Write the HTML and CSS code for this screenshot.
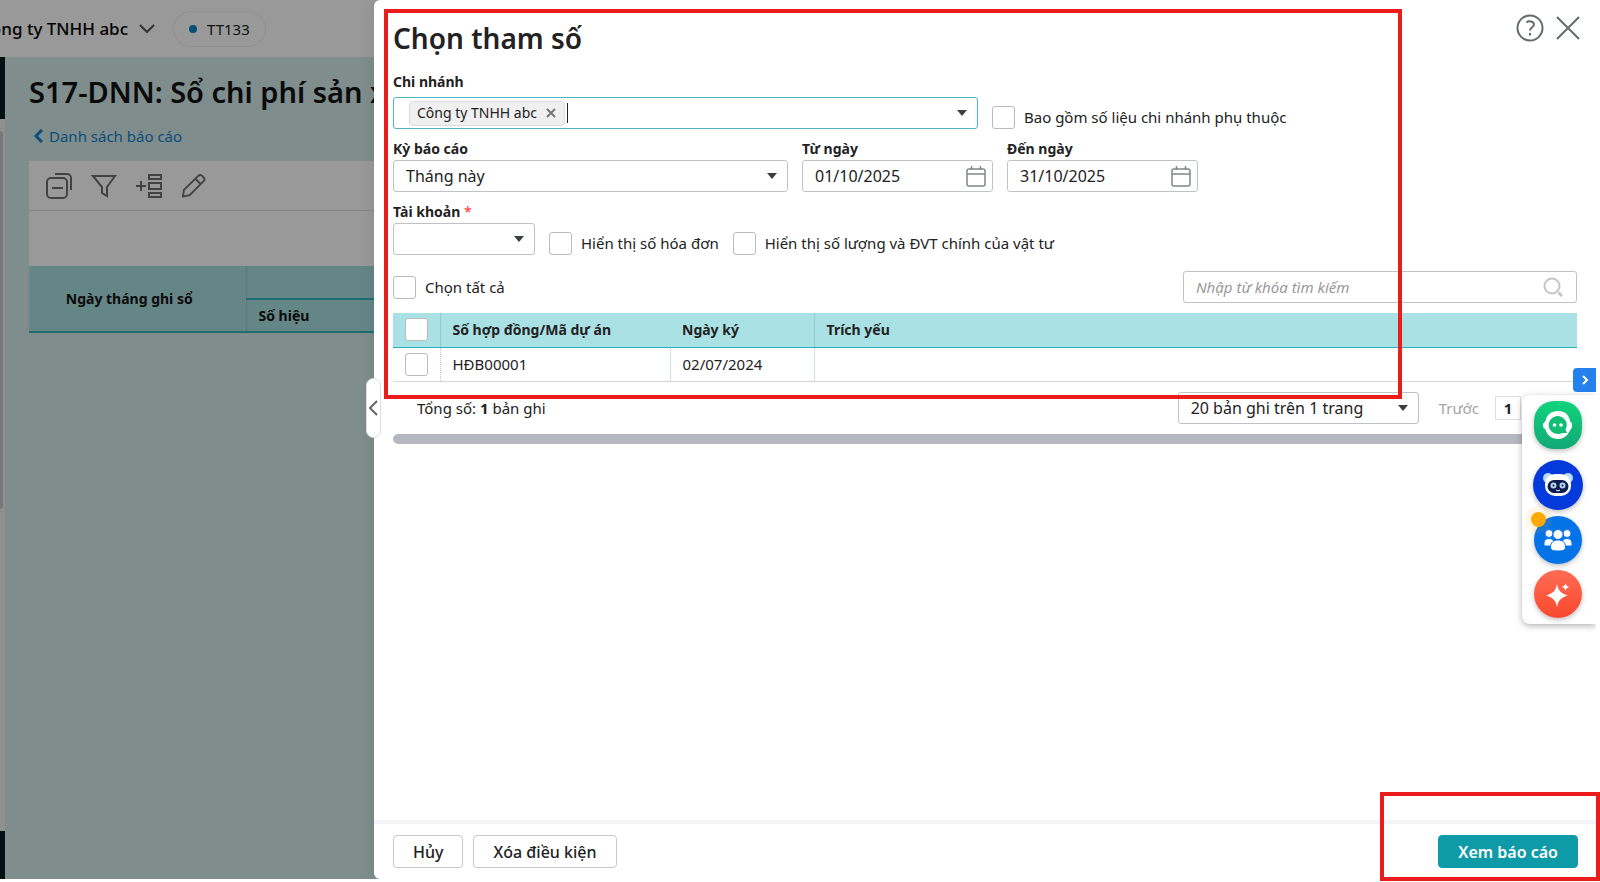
FILE: index.html
```html
<!DOCTYPE html>
<html lang="vi">
<head>
    <meta charset="UTF-8">
    <meta name="viewport" content="width=device-width, initial-scale=1.0">
    <title>S17-DNN: Sổ chi phí sản xuất</title>
    <link rel="stylesheet" href="styles.css">
</head>
<body>

<div class="app">

    <header class="topbar">
        <div class="company"><span>Công ty TNHH abc</span></div>
        <svg class="chevron" width="16" height="10" viewBox="0 0 16 10" fill="none" stroke="#555" stroke-width="2"><path d="M1 1l7 7 7-7"/></svg>
        <span class="badge">TT133</span>
    </header>

    <div class="workspace">
        <div class="sidebar"><div class="sidebar-scroll"><div class="sidebar-thumb"></div></div></div>
        <main class="report">
            <h1>S17-DNN: Sổ chi phí sản xuất</h1>
            <a class="back" href="#">
                <svg width="9" height="14" viewBox="0 0 9 14" fill="none" stroke="currentColor" stroke-width="3"><path d="M8 1L2 7l6 6"/></svg>
                Danh sách báo cáo
            </a>
            <div class="toolbar">
                <button aria-label="Thu gọn">
                    <svg width="26" height="26" viewBox="0 0 26 26" fill="none" stroke="#6f6f6f" stroke-width="2"><rect x="1" y="5" width="20" height="20" rx="4"/><path d="M6 15h11M9 1h12a4 4 0 0 1 4 4v12"/></svg>
                </button>
                <button aria-label="Lọc">
                    <svg width="26" height="24" viewBox="0 0 26 24" fill="none" stroke="#6f6f6f" stroke-width="2"><path d="M2 2h22l-8 11v9l-5-3v-6z"/></svg>
                </button>
                <button aria-label="Thêm cột">
                    <svg width="26" height="24" viewBox="0 0 26 24" fill="none" stroke="#6f6f6f" stroke-width="2"><path d="M0 12h10M5 7v10"/><path d="M13 1h12v4H13zM13 9h12v6H13zM13 19h12v4H13z"/></svg>
                </button>
                <button aria-label="Sửa">
                    <svg width="25" height="26" viewBox="0 0 26 26" fill="none" stroke="#6f6f6f" stroke-width="2"><path d="M2 24l1-7L18 2.500a3 3 0 0 1 4 0l1.500 1.500a3 3 0 0 1 0 4L9 22.500zM15 5.500l5.500 5.500"/></svg>
                </button>
            </div>
            <div class="report-blank"></div>
            <table class="report-table">
                <thead>
                    <tr><th class="day" rowspan="2">Ngày tháng ghi sổ</th><th class="group"></th></tr>
                    <tr><th class="number">Số hiệu</th></tr>
                </thead>
            </table>
        </main>
    </div>

    <div class="overlay"></div>

    <form class="drawer">
        <button type="button" class="handle" aria-label="Thu gọn bảng">
            <svg width="9" height="16" viewBox="0 0 9 16" fill="none" stroke="#666" stroke-width="2"><path d="M8 1L1 8l7 7"/></svg>
        </button>

        <div class="drawer-head">
            <h2>Chọn tham số</h2>
            <div class="head-actions">
                <button type="button" aria-label="Trợ giúp">
                    <svg width="28" height="28" viewBox="0 0 28 28" fill="none" stroke="#666b6f" stroke-width="2"><circle cx="14" cy="14" r="12.500"/><path d="M10.500 8.500c2-2 7.500-1.500 7.500 2 0 3-4 2.500-4 6"/><path d="M14 19v2.500"/></svg>
                </button>
                <button type="button" aria-label="Đóng">
                    <svg width="24" height="24" viewBox="0 0 24 24" fill="none" stroke="#666b6f" stroke-width="2"><path d="M1 1l22 22M23 1L1 23"/></svg>
                </button>
            </div>
        </div>

        <div class="drawer-body">
            <div class="form-row">
                <div class="field branch">
                    <label for="branch">Chi nhánh</label>
                    <div class="tagbox">
                        <span class="tag">Công ty TNHH abc
                            <button type="button" aria-label="Bỏ chọn"><svg width="10" height="10" viewBox="0 0 10 10" stroke="#777" stroke-width="2"><path d="M1 1l8 8M9 1L1 9"/></svg></button>
                        </span>
                        <span class="caret"></span>
                        <input type="text" id="branch">
                        <svg class="arrow" width="10" height="6" viewBox="0 0 10 6" fill="#3d4043"><path d="M0 0h10L5 6z"/></svg>
                    </div>
                </div>
                <label class="check"><input type="checkbox"> Bao gồm số liệu chi nhánh phụ thuộc</label>
            </div>

            <div class="form-row">
                <div class="field period">
                    <label for="period">Kỳ báo cáo</label>
                    <div class="select">
                        <select id="period"><option>Tháng này</option></select>
                        <svg class="arrow" width="10" height="6" viewBox="0 0 10 6" fill="#3d4043"><path d="M0 0h10L5 6z"/></svg>
                    </div>
                </div>
                <div class="field date">
                    <label for="from">Từ ngày</label>
                    <div class="datebox">
                        <input type="text" id="from" value="01/10/2025">
                        <button type="button" aria-label="Chọn ngày bắt đầu"><svg width="20" height="21" viewBox="0 0 20 21" fill="none" stroke="#83878b"><rect x="1" y="3" width="18" height="17" rx="2" stroke-width="1.500"/><path d="M1 8h18M5.500 0v4M14.500 0v4" stroke-width="1.500"/></svg></button>
                    </div>
                </div>
                <div class="field date">
                    <label for="to">Đến ngày</label>
                    <div class="datebox">
                        <input type="text" id="to" value="31/10/2025">
                        <button type="button" aria-label="Chọn ngày kết thúc"><svg width="20" height="21" viewBox="0 0 20 21" fill="none" stroke="#83878b"><rect x="1" y="3" width="18" height="17" rx="2" stroke-width="1.500"/><path d="M1 8h18M5.500 0v4M14.500 0v4" stroke-width="1.500"/></svg></button>
                    </div>
                </div>
            </div>

            <div class="form-row">
                <div class="field account">
                    <label for="account">Tài khoản <span class="required">*</span></label>
                    <div class="select">
                        <select id="account"><option></option></select>
                        <svg class="arrow" width="10" height="6" viewBox="0 0 10 6" fill="#3d4043"><path d="M0 0h10L5 6z"/></svg>
                    </div>
                </div>
                <label class="check"><input type="checkbox"> Hiển thị số hóa đơn</label>
                <label class="check"><input type="checkbox"> Hiển thị số lượng và ĐVT chính của vật tư</label>
            </div>

            <div class="list-tools">
                <label class="check"><input type="checkbox"> Chọn tất cả</label>
                <div class="search">
                    <input type="text" placeholder="Nhập từ khóa tìm kiếm" aria-label="Tìm kiếm">
                    <svg width="20" height="20" viewBox="0 0 20 20" fill="none" stroke="#c4c6c8" stroke-width="2"><circle cx="9" cy="9" r="7.500"/><path d="M15.500 15.500l3.500 3.500" stroke-width="3"/></svg>
                </div>
            </div>

            <table class="contracts">
                <thead>
                    <tr>
                        <th class="col-check"><input type="checkbox" aria-label="Chọn tất cả hợp đồng"></th>
                        <th class="col-code">Số hợp đồng/Mã dự án</th>
                        <th class="col-date">Ngày ký</th>
                        <th>Trích yếu</th>
                    </tr>
                </thead>
                <tbody>
                    <tr>
                        <td class="col-check"><input type="checkbox" aria-label="Chọn HĐB00001"></td>
                        <td>HĐB00001</td>
                        <td>02/07/2024</td>
                        <td></td>
                    </tr>
                </tbody>
            </table>

            <div class="pager">
                <span class="total">Tổng số: <b>1</b> bản ghi</span>
                <div class="select page-size">
                    <select aria-label="Số bản ghi trên trang"><option>20 bản ghi trên 1 trang</option></select>
                    <svg class="arrow" width="10" height="6" viewBox="0 0 10 6" fill="#3d4043"><path d="M0 0h10L5 6z"/></svg>
                </div>
                <a class="prev" href="#">Trước</a>
                <a class="page" href="#">1</a>
            </div>
            <div class="hscroll"></div>
        </div>

        <div class="drawer-foot">
            <button type="button" class="btn">Hủy</button>
            <button type="button" class="btn">Xóa điều kiện</button>
            <button type="submit" class="btn primary">Xem báo cáo</button>
        </div>
    </form>

    <button class="dock-toggle" aria-label="Ẩn tiện ích">
        <svg width="8" height="10" viewBox="0 0 8 10" fill="none" stroke="#fff" stroke-width="2"><path d="M2 1l4 4-4 4"/></svg>
    </button>
    <div class="dock">
        <button class="dock-item chat" aria-label="Trò chuyện">
            <svg width="30" height="28" viewBox="0 0 30 28"><path fill="#fff" d="M15 0C8 0 3.500 4 2.500 10L0 13v3l2.500 2.500C4 24 8.500 28 15 28c5.500 0 9-3 11-7l3-4.500v-4L27 10C26 4 22 0 15 0z"/><path fill="#12bc76" d="M15 5a9.500 9 0 1 0 4.500 17H24l-1.500-3.500A9.500 9 0 0 0 15 5z"/><circle cx="11.500" cy="14" r="1.800" fill="#fff"/><circle cx="18" cy="14" r="1.800" fill="#fff"/></svg>
        </button>
        <button class="dock-item bot" aria-label="Trợ lý">
            <svg width="30" height="26" viewBox="0 0 30 26"><circle cx="5" cy="6" r="5" fill="#b9dcff"/><circle cx="25" cy="6" r="5" fill="#b9dcff"/><rect x="2" y="2" width="26" height="22" rx="10" fill="#fff"/><rect x="4.500" y="8" width="21" height="13" rx="6.500" fill="#0c1c50"/><g fill="none" stroke="#b8d4e8" stroke-width="2"><circle cx="10.500" cy="13.500" r="2"/><circle cx="19.500" cy="13.500" r="2"/></g><path d="M13 18q2 2 4 0" fill="none" stroke="#fff"/></svg>
        </button>
        <button class="dock-item team" aria-label="Cộng đồng">
            <svg width="28" height="22" viewBox="0 0 28 22" fill="#fff" stroke="#0573e8"><circle cx="5" cy="4.500" r="4" /><circle cx="23" cy="4.500" r="4"/><path d="M0 17v-3c0-3 2-4.500 5-4.500s5 1.500 5 4.500v3zM18 17v-3c0-3 2-4.500 5-4.500s5 1.500 5 4.500v3z"/><circle cx="14" cy="5.500" r="5"/><path d="M6.500 18c0-4.500 3-7 7.500-7s7.500 2.500 7.500 7c0 3-2 4-7.500 4s-7.500-1-7.500-4z"/></svg>
            <span class="dot"></span>
        </button>
        <button class="dock-item ai" aria-label="AI">
            <svg width="26" height="26" viewBox="0 0 26 26" fill="#fff"><path d="M12 3c1.500 7 4 9.500 11 11.500-7 2-9.500 4.500-11 11.500-1.500-7-4-9.500-11-11.500C8 12.500 10.500 10 12 3zM20.500 2c.5 2.500 1.500 3.500 4 4-2.500.5-3.500 1.500-4 4-.5-2.500-1.500-3.500-4-4 2.500-.5 3.500-1.500 4-4z"/></svg>
        </button>
    </div>
</div>

<!-- highlight frames -->
<div class="frame frame-params"></div>
<div class="frame frame-submit"></div>

</body>
</html>
```
FILE: styles.css
```css
* {
    box-sizing: border-box;
}
body {
    margin: 0;
    padding: 0 4px 3px 0;
    height: 100vh;
    position: relative;
    overflow: hidden;
    background: #fff;
    color: #222;
    font-family: "Noto Sans", sans-serif;
    font-size: 15px;
    line-height: 22px;
}
button, input, select {
    font: inherit;
    font-size: 16px;
    color: inherit;
}
button {
    padding: 0;
    border: none;
    background: none;
    cursor: pointer;
}
svg {
    display: block;
    flex: none;
}
.app {
    position: relative;
    height: 100%;
    display: flex;
    flex-direction: column;
    overflow: hidden;
}

/* page behind the drawer */
.topbar {
    height: 57px;
    display: flex;
    align-items: center;
    background: #fff;
}
.company {
    width: 128px;
    display: flex;
    justify-content: flex-end;
    overflow: hidden;
    white-space: nowrap;
    font-size: 17px;
    font-weight: 500;
    color: #000;
}
.chevron {
    margin: 0 18px 0 11px;
}
.badge {
    display: flex;
    align-items: center;
    gap: 10px;
    height: 36px;
    padding: 0 15px;
    border: 1px solid #f0f0f0;
    border-radius: 18px;
}
.badge::before {
    content: "";
    width: 8px;
    height: 8px;
    border-radius: 50%;
    background: #0b84c0;
}
.workspace {
    flex: 1;
    display: flex;
    background: #d4ebeb;
}
.sidebar {
    width: 5px;
    padding: 62px 0 48px;
    background: #001a1e;
}
.sidebar-scroll {
    height: 100%;
    padding-top: 12px;
    background: #f0f0f2;
}
.sidebar-thumb {
    width: 3px;
    height: 54%;
    border-radius: 0 3px 3px 0;
    background: #c9c9cd;
}
.report {
    flex: 1;
    min-width: 0;
    padding: 15px 0 0 24px;
}
.report h1 {
    max-width: 346px;
    margin: 0;
    font-size: 29px;
    font-weight: 600;
    line-height: 40px;
    color: #111;
    white-space: nowrap;
    overflow: hidden;
}
.back {
    display: inline-flex;
    align-items: center;
    gap: 6px;
    margin: 13px 0 14px 5px;
    color: #1583c8;
    text-decoration: none;
}
.toolbar {
    height: 50px;
    padding: 0 17px;
    display: flex;
    align-items: center;
    gap: 19px;
    background: #fff;
    border-bottom: 1px solid #e0e0e0;
}
.report-blank {
    height: 55px;
    background: #fff;
}
.report-table {
    width: 100%;
    border-collapse: collapse;
    table-layout: fixed;
    background: #a9dfe2;
    border-bottom: 2px solid #35b4bf;
    font-size: 14px;
    color: #111;
}
.report-table .day {
    width: 217px;
    padding: 0 16px 0 0;
    border-right: 1px solid #8fc9cf;
}
.report-table .group {
    height: 33px;
    border-bottom: 2px solid #35b4bf;
}
.report-table .number {
    height: 33px;
    padding: 0 12px;
    text-align: left;
}
.overlay {
    position: absolute;
    inset: 0;
    background: rgba(0, 0, 0, 0.4);
}

/* drawer */
.drawer {
    position: absolute;
    top: 0;
    right: 0;
    bottom: 0;
    left: 374px;
    display: flex;
    flex-direction: column;
    background: #fff;
    border-radius: 6px 0 0 6px;
    box-shadow: 0 0 16px rgba(0, 0, 0, 0.1);
}
.handle {
    position: absolute;
    left: -8px;
    top: 43%;
    width: 15px;
    height: 60px;
    display: flex;
    align-items: center;
    justify-content: center;
    background: #fff;
    border: 1px solid #ddd;
    border-radius: 8px;
}
.drawer-head {
    display: flex;
    justify-content: space-between;
    align-items: flex-start;
    padding: 14px 16px 0 19px;
}
.drawer-head h2 {
    margin: 4px 0 0;
    font-size: 28px;
    font-weight: 600;
    line-height: 40px;
}
.head-actions {
    display: flex;
    align-items: center;
    gap: 12px;
}
.drawer-body {
    flex: 1;
    padding: 13px 19px 0;
}
.form-row {
    display: flex;
    align-items: flex-end;
    gap: 14px;
    margin-bottom: 9px;
}
.field {
    display: flex;
    flex-direction: column;
}
.field label {
    font-size: 14px;
    font-weight: 700;
}
.branch label {
    margin-bottom: 4px;
}
.branch {
    width: 585px;
}
.period {
    width: 395px;
}
.date {
    width: 191px;
}
.account {
    width: 142px;
}
.field label .required {
    color: #f33;
    font-weight: 400;
}
.tagbox, .select, .datebox, .search {
    height: 32px;
    display: flex;
    align-items: center;
    border: 1px solid #bfc3c9;
    border-radius: 3px;
    background: #fff;
}
.tagbox {
    padding: 0 10px 0 15px;
    border-color: #4fb6c2;
}
.tagbox input {
    flex: 1;
    min-width: 0;
    border: none;
    outline: none;
}
.tag {
    display: flex;
    align-items: center;
    gap: 9px;
    height: 25px;
    padding: 0 8px 0 7px;
    background: #f0f0f0;
    border: 1px solid #dcdcde;
    border-radius: 4px;
    font-size: 14px;
}
.caret {
    width: 1px;
    height: 20px;
    margin-left: 2px;
    background: #222;
}
.select {
    position: relative;
}
.select select {
    width: 100%;
    height: 100%;
    padding: 0 30px 0 12px;
    border: none;
    outline: none;
    background: none;
    appearance: none;
}
.select .arrow {
    position: absolute;
    right: 10px;
    pointer-events: none;
}
.datebox {
    padding: 0 6px 0 12px;
}
.datebox input {
    flex: 1;
    min-width: 0;
    padding: 0;
    border: none;
    outline: none;
}
.check {
    display: flex;
    align-items: center;
    gap: 9px;
    height: 24px;
}
input[type="checkbox"] {
    appearance: none;
    flex: none;
    width: 23px;
    height: 23px;
    margin: 0;
    border: 1px solid #b9bbbd;
    border-radius: 3px;
    background: #fff;
}
.list-tools {
    display: flex;
    justify-content: space-between;
    align-items: center;
    margin: 16px 0 10px;
}
.search {
    width: 394px;
    padding: 0 13px 0 12px;
}
.search input {
    flex: 1;
    padding: 0;
    border: none;
    outline: none;
}
.search input::placeholder {
    color: #999;
    font-size: 15px;
    font-style: italic;
}
.contracts {
    width: 100%;
    border-collapse: collapse;
    table-layout: fixed;
}
.contracts th, .contracts td {
    height: 34px;
    padding: 0 12px;
    text-align: left;
}
.contracts th {
    background: #a9e1e5;
    border-bottom: 1px solid #2bb0bd;
    font-size: 14px;
    font-weight: 700;
}
.contracts td {
    border-bottom: 1px solid #d8d8d8;
}
.contracts td + td {
    border-left: 1px dotted #9ad3e0;
}
.contracts th:nth-child(2), .contracts th:nth-child(4) {
    border-left: 1px solid #90c9d0;
}
.contracts .col-check {
    width: 47px;
}
.contracts .col-check input {
    display: block;
}
.contracts .col-code {
    width: 230px;
}
.contracts .col-date {
    width: 144px;
}
.pager {
    display: flex;
    align-items: center;
    padding: 10px 56px 10px 24px;
}
.page-size {
    width: 241px;
    margin-left: auto;
}
.prev {
    margin: 0 16px 0 20px;
    color: #a5a5a5;
    text-decoration: none;
}
.page {
    width: 26px;
    border: 1px solid #ddd;
    color: inherit;
    font-weight: 700;
    text-align: center;
    text-decoration: none;
}
.hscroll {
    height: 10px;
    border-radius: 5px;
    background: #b5b8c1;
}
.drawer-foot {
    display: flex;
    gap: 10px;
    padding: 11px 18px 11px 19px;
    border-top: 4px solid #f3f3f8;
}
.btn {
    height: 33px;
    padding: 0 19px;
    border: 1px solid #c6c9d0;
    border-radius: 4px;
    font-weight: 500;
}
.btn.primary {
    margin-left: auto;
    border-color: #0e9aa7;
    background: #0e9aa7;
    color: #fff;
    font-weight: 600;
}

/* floating utilities on the right edge */
.dock-toggle {
    position: absolute;
    right: 0;
    top: 368px;
    width: 23px;
    height: 24px;
    display: flex;
    align-items: center;
    justify-content: center;
    background: #2680eb;
    border-radius: 4px 0 0 4px;
}
.dock {
    position: absolute;
    right: 0;
    top: 395px;
    width: 74px;
    padding: 6px 3px 6px 0;
    display: flex;
    flex-direction: column;
    align-items: center;
    background: #fff;
    border-radius: 8px 0 0 8px;
    box-shadow: 0 2px 6px rgba(0, 0, 0, 0.3);
}
.dock-item {
    position: relative;
    width: 48px;
    height: 48px;
    display: flex;
    align-items: center;
    justify-content: center;
    border-radius: 50%;
    box-shadow: 0 2px 5px rgba(0, 0, 0, 0.25);
}
.chat {
    margin-bottom: 11px;
    border-radius: 20px;
    background: linear-gradient(#0fd47c, #13a877);
}
.bot {
    width: 50px;
    height: 50px;
    background: #0439dc;
}
.team {
    margin: 6px 0;
    background: #0573e8;
}
.ai {
    background: linear-gradient(#ff6b55, #f9492d);
}
.dot {
    position: absolute;
    left: -3px;
    top: -4px;
    width: 15px;
    height: 15px;
    border-radius: 50%;
    background: #ffa800;
    box-shadow: 0 0 0 6px rgba(255, 168, 0, 0.1);
}

.frame {
    position: absolute;
    border: 4px solid #ea1c1c;
    pointer-events: none;
}
.frame-params {
    top: 9px;
    left: 384px;
    right: 198px;
    height: 390px;
}
.frame-submit {
    right: 0;
    bottom: 1px;
    width: 220px;
    height: 89px;
}
```
